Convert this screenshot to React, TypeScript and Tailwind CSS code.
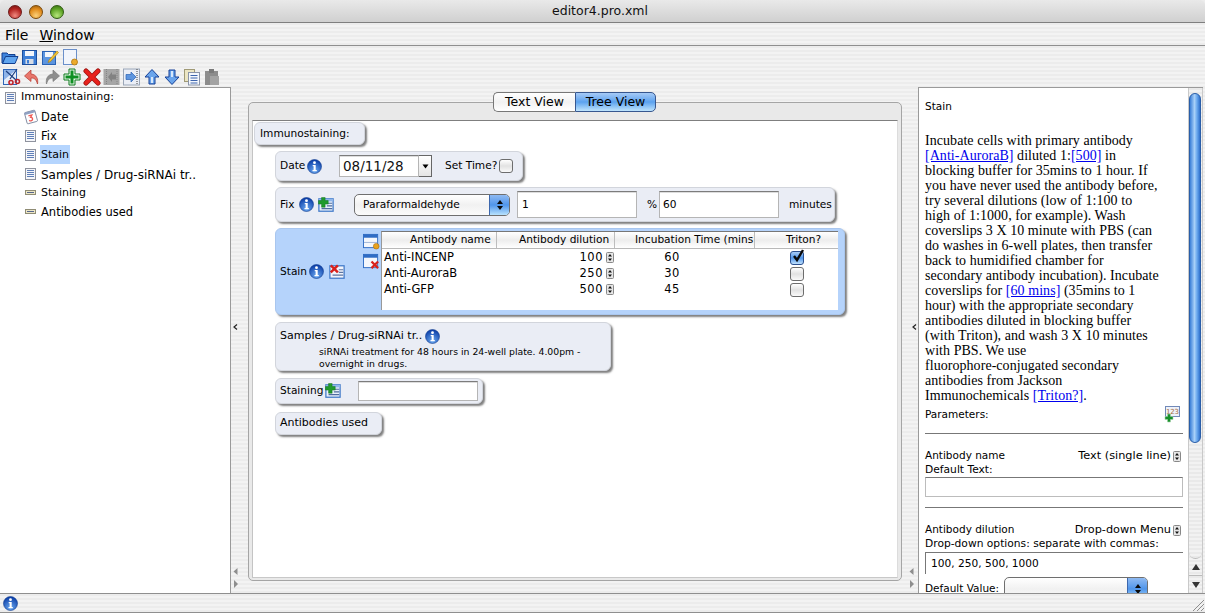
import React from "react";

type P = { className?: string };

const Svg = ({ s = 18, children, className }: { s?: number; children: React.ReactNode; className?: string }) => (
  <svg width={s} height={s} viewBox="0 0 18 18" className={"shrink-0 " + (className ?? "")}>
    {children}
  </svg>
);

const Info = ({ s = 15 }: { s?: number }) => (
  <svg width={s} height={s} viewBox="0 0 15 15" className="shrink-0">
    <defs>
      <radialGradient id="ig" cx="50%" cy="80%" r="75%">
        <stop offset="0" stopColor="#6aa8f0" />
        <stop offset="1" stopColor="#0c3fa8" />
      </radialGradient>
    </defs>
    <circle cx="7.5" cy="7.5" r="7" fill="url(#ig)" stroke="#123d8f" strokeWidth="0.6" />
    <circle cx="7.5" cy="3.7" r="1.4" fill="#fff" />
    <path d="M5.7 6h3v5h1.1v1.3H5.5V11h1.1V7.3H5.7z" fill="#fff" />
  </svg>
);

const ListAdd = () => (
  <Svg s={16}>
    <rect x="1" y="2" width="16" height="14" fill="#e9f0fb" stroke="#3f78c8" strokeWidth="1.4" />
    <rect x="1" y="2" width="16" height="3" fill="#8fb6ea" />
    <path d="M10 7h6M10 10h6M4 13h12" stroke="#4f6c9e" strokeWidth="1.3" />
    <path d="M4 0.5h4v3.500h3.500v4H8v3.500H4V8H0.500V4H4z" fill="#1f9a2c" stroke="#0e6a18" strokeWidth="0.5" />
  </Svg>
);

const ListDel = () => (
  <Svg s={16}>
    <rect x="1" y="2" width="16" height="14" fill="#f3f5fb" stroke="#3f78c8" strokeWidth="1.4" />
    <path d="M11 6.500h5M11 9.500h5M4 12.500h12" stroke="#5d76a3" strokeWidth="1.3" />
    <path d="M2 1.500l8 8M10 1.500l-8 8" stroke="#d8211c" strokeWidth="2.800" />
  </Svg>
);

const RowAdd = () => (
  <Svg s={17}>
    <rect x="0.5" y="1.5" width="15" height="14" fill="#f4f7fc" stroke="#2f6cc4" />
    <rect x="0.5" y="1.5" width="15" height="3.5" fill="#2f6cc4" />
    <path d="M1 10h14" stroke="#9db4d6" />
    <circle cx="14" cy="14" r="3" fill="#e8a21e" stroke="#a8690c" strokeWidth="0.6" />
  </Svg>
);

const RowDel = () => (
  <Svg s={17}>
    <rect x="0.5" y="1.5" width="15" height="14" fill="#f4f7fc" stroke="#2f6cc4" />
    <rect x="0.5" y="1.5" width="15" height="3.5" fill="#2f6cc4" />
    <path d="M9 9l7 7M16 9l-7 7" stroke="#d8211c" strokeWidth="2.4" />
  </Svg>
);

const DocIcon = () => (
  <svg width="12" height="12" viewBox="0 0 12 12" className="shrink-0 ml-[1px]">
    <rect x="0.500" y="0.500" width="10" height="11" fill="#f4f5f9" stroke="#8f939e" />
    <path d="M2 2.500h7M2 4.500h7M2 6.500h7M2 8.500h7" stroke="#5f7fb8" />
  </svg>
);

const FieldIcon = () => (
  <svg width="12" height="12" viewBox="0 0 12 12" className="shrink-0 ml-[1px]">
    <rect x="0.500" y="3.500" width="10" height="4" fill="#ece6c6" stroke="#8f8c74" />
    <path d="M2 5.500h7" stroke="#56668c" />
  </svg>
);

const CalIcon = () => (
  <svg width="16" height="16" viewBox="0 0 18 18" className="shrink-0 -ml-[1px]">
    <g transform="rotate(-15 9 9)">
      <rect x="3" y="2.5" width="12" height="13" rx="1" fill="#fff" stroke="#7e8aa0" />
      <rect x="3" y="2.5" width="12" height="2.5" fill="#8fa0c2" />
      <path d="M6.5 7h4l-2 2.2a2 2 0 1 1-2.2 2.6" fill="none" stroke="#ee5a55" strokeWidth="1.5" />
    </g>
  </svg>
);

const Open = () => (
  <Svg>
    <path d="M1 5h5l1.500 1.500H14v2H5L2 15H1z" fill="#3c83dc" stroke="#123f8f" />
    <path d="M4.500 8.500H17l-3 7H1.500z" fill="#5fa5ef" stroke="#123f8f" />
  </Svg>
);
const Save = () => (
  <Svg>
    <rect x="1.500" y="2.500" width="14" height="14" fill="#3e7fd6" stroke="#1d4f9e" />
    <rect x="4" y="3" width="9" height="5" fill="#f3f6fb" />
    <rect x="4.500" y="11" width="8" height="5" fill="#d8dde6" />
    <rect x="6" y="12" width="2" height="3.500" fill="#3e7fd6" />
  </Svg>
);
const SaveAs = () => (
  <Svg>
    <rect x="1.500" y="3.500" width="13" height="13" fill="#5d95df" stroke="#2a62b4" />
    <rect x="4" y="4" width="8" height="5" fill="#f3f6fb" />
    <path d="M8 12l8-9 1.500 1.500-8 9-2.500 1z" fill="#f4c430" stroke="#a67a10" strokeWidth="0.6" />
  </Svg>
);
const NewDoc = () => (
  <Svg>
    <rect x="2.500" y="1.500" width="13" height="15" fill="#f2f5fb" stroke="#6a8fca" />
    <circle cx="13.500" cy="14" r="3" fill="#ecab2c" stroke="#b07610" strokeWidth="0.8" />
  </Svg>
);
const Cut = () => (
  <Svg>
    <rect x="0.500" y="1.500" width="13" height="15" fill="#e6edf9" stroke="#2f66b8" />
    <path d="M1 2h12L1 12z" fill="#8fb4e8" />
    <path d="M3 3l10 9M14 1L7 11" stroke="#1d3f80" strokeWidth="1.200" />
    <circle cx="14.500" cy="13.500" r="2" fill="none" stroke="#c0242a" strokeWidth="1.600" />
    <circle cx="8" cy="14.500" r="2" fill="none" stroke="#c0242a" strokeWidth="1.600" />
  </Svg>
);
const Undo = ({ c = "#e8766c", d = "#b5382e" }: { c?: string; d?: string }) => (
  <Svg>
    <path d="M8 2L1.500 8 8 13.500V10c3.500 0 5 1 6.500 6 1-5-1-9.500-6.500-10z" fill={c} stroke={d} strokeWidth="0.7" />
  </Svg>
);
const Redo = () => (
  <Svg>
    <path d="M10 2l6.500 6L10 13.500V10c-3.500 0-5 1-6.500 6-1-5 1-9.500 6.500-10z" fill="#8e8e8e" stroke="#7b7b7b" strokeWidth="0.7" />
  </Svg>
);
const Plus = () => (
  <Svg>
    <path d="M6 1h6v5h5v6h-5v5H6v-5H1V6h5z" fill="#eaf6ea" stroke="#0d7a1c" strokeWidth="1" strokeLinejoin="round" />
    <path d="M7.500 2.500h3v5h5v3h-5v5h-3v-5h-5v-3h5z" fill="#0f8f22" />
  </Svg>
);
const Del = () => (
  <Svg>
    <path d="M3 3l12 12M15 3L3 15" stroke="#9a1512" strokeWidth="5" strokeLinecap="round" />
    <path d="M3 3l12 12M15 3L3 15" stroke="#e8211c" strokeWidth="3.500" strokeLinecap="round" />
  </Svg>
);
const Indent = () => (
  <Svg>
    <rect x="0.500" y="1" width="16" height="16" fill="#a6a6a6" />
    <path d="M3.500 1v16M14 1v16" stroke="#858585" strokeDasharray="1 1" />
    <path d="M13 6.500H9V4L5 9l4 5v-2.500h4z" fill="#828282" />
  </Svg>
);
const Outdent = () => (
  <Svg>
    <rect x="0.500" y="1" width="16" height="16" fill="#eaeef6" stroke="#9aa6b8" />
    <path d="M14 1v16" stroke="#444" strokeDasharray="1 1" />
    <path d="M3 6.500h5V4l5 5-5 5v-2.500H3z" fill="#5d95df" stroke="#2a62b4" strokeWidth="0.7" />
  </Svg>
);
const Up = () => (
  <Svg>
    <path d="M9 1.500L16 9h-4v7H6V9H2z" fill="#6aa5ec" stroke="#153f96" strokeLinejoin="round" />
    <path d="M8 9h2v6H8z" fill="#d8e8fb" />
  </Svg>
);
const Down = () => (
  <Svg>
    <path d="M9 16.500L16 9h-4V2H6v7H2z" fill="#6aa5ec" stroke="#153f96" strokeLinejoin="round" />
    <path d="M8 3h2v6H8z" fill="#d8e8fb" />
  </Svg>
);
const Copy = () => (
  <Svg>
    <rect x="1.500" y="1.500" width="10" height="12" fill="#ece6c4" stroke="#a09a76" />
    <rect x="5.500" y="4.500" width="11" height="12.500" fill="#f4f7fc" stroke="#8a94a8" />
    <path d="M7.500 7.500h7M7.500 10h7M7.500 12.500h7M7.500 15h7" stroke="#3d64ad" />
  </Svg>
);
const Paste = () => (
  <Svg>
    <rect x="2" y="3" width="13" height="14" fill="#8c8c8c" />
    <rect x="6" y="1" width="5" height="4" fill="#7a7a7a" />
    <rect x="7" y="8" width="9" height="9" fill="#a3a3a3" />
  </Svg>
);
const Add123 = () => (
  <svg width="17" height="18" viewBox="0 0 17 18" className="shrink-0">
    <rect x="1.500" y="0.500" width="14" height="10" fill="#eef2fa" stroke="#7189b8" />
    <text x="2" y="8" fontSize="7" fill="#a56a3c" fontFamily="DejaVu Sans, sans-serif" textLength="13">123</text>
    <path d="M3.500 8h3v2.500H9v3H6.500V16h-3v-2.500H1v-3h2.500z" fill="#17902a" stroke="#aad3ae" strokeWidth="0.6" />
  </svg>
);

const Card = ({ className, children }: P & { children: React.ReactNode }) => (
  <div
    className={
      "rounded-[6px] border border-[#d2d5dc] bg-[#eaedf5] whitespace-nowrap shadow-[2px_2px_2px_rgba(0,0,0,0.5)] " + (className ?? "")
    }
  >
    {children}
  </div>
);

const Field = ({ className, children }: P & { children?: React.ReactNode }) => (
  <div
    className={
      "bg-white border border-[#b5b5b5] border-t-[#7c7c7c] shadow-[inset_0_1px_0_#ddd] flex items-center " + (className ?? "")
    }
  >
    {children}
  </div>
);

const Stepper = () => (
  <svg width="8" height="11" viewBox="0 0 8 11" className="shrink-0">
    <rect x="0.500" y="0.500" width="7" height="10" rx="1" fill="#e6e6e6" stroke="#888" />
    <path d="M4 2l2 2.500H2zM4 9L2 6.500h4z" fill="#111" />
  </svg>
);

const Check = ({ on }: { on?: boolean }) => (
  <div
    className={
      "relative w-[14px] h-[14px] rounded-[3px] border " +
      (on
        ? "border-[#2a4f8f] bg-gradient-to-b from-[#a9cdf7] via-[#4f95ea] to-[#bfe0fb]"
        : "border-[#6d6d6d] bg-gradient-to-b from-[#ffffff] via-[#e2e2e2] to-[#fafafa]")
    }
  >
    {on && (
      <svg width="16" height="16" viewBox="0 0 16 16" className="absolute -top-[4px] left-0">
        <path d="M3 8l3 4 6-10" fill="none" stroke="#0a0a0a" strokeWidth="2.400" />
      </svg>
    )}
  </div>
);

const Combo = ({ className, children }: P & { children?: React.ReactNode }) => (
  <div
    className={
      "flex rounded-[5px] border border-[#6f6f6f] bg-gradient-to-b from-[#ffffff] via-[#f1f1f1] to-[#fbfbfb] overflow-hidden " +
      (className ?? "")
    }
  >
    <div className="flex-1 pl-[8px] flex items-center leading-none">{children}</div>
    <div className="w-[20px] border-l border-[#3c67ad] bg-gradient-to-b from-[#8fbaf2] via-[#4f95ea] to-[#b8e2fd] flex items-center justify-center">
      <svg width="8" height="12" viewBox="0 0 8 12">
        <path d="M4 1l3 4H1zM4 11L1 7h6z" fill="#0a0a0a" />
      </svg>
    </div>
  </div>
);

const HeadCell = ({ className, children }: P & { children: React.ReactNode }) => (
  <div className={"h-[16px] border-r border-[#bdbdbd] flex items-center justify-start pl-[20px] overflow-hidden whitespace-nowrap " + (className ?? "")}>
    {children}
  </div>
);

const rows = [
  { n: "Anti-INCENP", d: "100", t: "60", c: true },
  { n: "Anti-AuroraB", d: "250", t: "30", c: false },
  { n: "Anti-GFP", d: "500", t: "45", c: false },
];

const TreeItem = ({ icon, label, sel, size }: { icon: React.ReactNode; label: string; sel?: boolean; size: string }) => (
  <div className="flex items-center h-[19px] pl-[23px]">
    <div className="w-[16px] flex justify-start">{icon}</div>
    <span className={"px-[1px] pt-[2px] h-[19px] flex items-center " + size + (sel ? " bg-[#b5d5fe]" : "")}>{label}</span>
  </div>
);

const stripes =
  "bg-[repeating-linear-gradient(180deg,#ececec_0px,#ececec_2px,#f3f3f3_2px,#f3f3f3_4px)]";

export default function App() {
  return (
    <div className="w-[1205px] h-[613px] overflow-hidden flex flex-col bg-[#ededed] text-black text-[10.600px] font-['DejaVu_Sans',sans-serif]">
      {/* title bar */}
      <div className="relative h-[23px] shrink-0 border-b border-[#7f7f7f] bg-[linear-gradient(180deg,#e9e9e9,#d0d0d0)] rounded-t-[5px] flex items-center justify-center pr-[5px] text-[12.500px] text-[#111]">
        <div className="absolute left-[8px] top-[5px] flex gap-[7px]">
          <span className="w-[14px] h-[14px] rounded-full border border-[#6b1a18] bg-[radial-gradient(circle_at_50%_80%,#f08a80,#b3231f_60%,#6c1512)]" />
          <span className="w-[14px] h-[14px] rounded-full border border-[#7a4a0c] bg-[radial-gradient(circle_at_50%_80%,#fbd07a,#e08a1a_60%,#8d560f)]" />
          <span className="w-[14px] h-[14px] rounded-full border border-[#2f5c12] bg-[radial-gradient(circle_at_50%_80%,#b5e67c,#5da325_60%,#33670f)]" />
        </div>
        editor4.pro.xml
      </div>
      {/* menu */}
      <div className={"h-[23px] shrink-0 flex items-center gap-[11px] pl-[5px] pt-[2px] text-[14px] border-b border-[#8f8f8f] " + stripes}>
        <span>File</span>
        <span><span className="underline">W</span>indow</span>
      </div>
      {/* toolbars */}
      <div className={"shrink-0 h-[41px] pt-[1px] pl-[1px] flex flex-col " + stripes}>
        <div className="flex gap-[2px] h-[20px] items-center">
          <Open /><Save /><SaveAs /><NewDoc />
        </div>
        <div className="flex gap-[2px] h-[20px] items-center pl-[2px]">
          <Cut /><Undo /><Redo /><Plus /><Del /><Indent /><Outdent /><Up /><Down /><Copy /><Paste />
        </div>
      </div>
      {/* main */}
      <div className="flex-1 min-h-0 flex">
        <div className="w-[231px] shrink-0 bg-white border-t border-r border-[#9a9a9a] pl-[1px] overflow-hidden">
          <div className="flex items-center h-[19px] pl-[3px] text-[11px]">
            <div className="w-[17px]"><DocIcon /></div>
            <span>Immunostaining:</span>
          </div>
          <TreeItem icon={<CalIcon />} label="Date" size="text-[11.500px]" />
          <TreeItem icon={<DocIcon />} label="Fix" size="text-[11.500px]" />
          <TreeItem icon={<DocIcon />} label="Stain" sel size="text-[11px]" />
          <TreeItem icon={<DocIcon />} label="Samples / Drug-siRNAi tr.." size="text-[12px]" />
          <TreeItem icon={<FieldIcon />} label="Staining" size="text-[11px]" />
          <TreeItem icon={<FieldIcon />} label="Antibodies used" size="text-[11.500px]" />
        </div>
        {/* left splitter */}
        <div className={"w-[17px] shrink-0 flex flex-col pl-[2px] pb-[1px] " + stripes}>
          <div className="flex-1 flex items-center">
            <svg width="5" height="6" viewBox="0 0 5 6"><path d="M4 0.500L1 3l3 2.500" fill="none" stroke="#222" strokeWidth="1.200" /></svg>
          </div>
          <svg width="6" height="24" viewBox="0 0 6 24" className="mb-[1px]">
            <path d="M4.500 1v7L0.500 4.500zM1 13v8l4-4z" fill="#8e8e8e" />
          </svg>
        </div>
        {/* center */}
        <div className={"flex-1 min-w-0 flex flex-col pt-[5px] pb-[12px] " + stripes}>
          <div className="relative z-10 flex justify-center h-[20px] text-[12.500px]">
            <div className="flex h-[20px] ml-[-1px]">
              <div className="w-[82px] rounded-l-[5px] border border-[#777] border-r-0 bg-gradient-to-b from-[#ffffff] via-[#f2f2f2] to-[#ffffff] flex items-center justify-center">Text View</div>
              <div className="w-[81px] rounded-r-[5px] border border-[#37578f] bg-gradient-to-b from-[#a6caf6] via-[#5ba2ee] to-[#bfe4fc] flex items-center justify-center">Tree View</div>
            </div>
          </div>
          <div className="-mt-[10px] flex-1 min-h-0 rounded-[5px] border border-[#a5a5a5] pt-[17px] px-[3px] pb-[2px] bg-[#e9e9e9] flex flex-col">
            <div className="flex-1 min-h-0 bg-white border-t border-t-[#7f7f7f] border-l border-l-[#c4c4c4] border-r border-r-[#dcdcdc] border-b border-b-[#c8c8c8] pt-[1px] pl-[1px] flex flex-col items-start gap-[6px] overflow-hidden">
              <Card className="w-[111px] h-[23px] flex items-center pl-[5px] pt-[1px]">Immunostaining:</Card>
              <div className="ml-[21px] flex flex-col items-start gap-[6px]">
                <Card className="w-[248px] h-[30px] flex items-center pl-[4px]">
                  <span className="w-[27px]">Date</span>
                  <Info />
                  <Field className="ml-[17px] w-[80px] h-[22px] pl-[3px] text-[13.500px] text-[#111]">08/11/28</Field>
                  <div className="w-[13px] h-[22px] border border-l-0 border-[#666] bg-gradient-to-b from-[#fff] to-[#e5e5e5] flex items-center justify-center">
                    <svg width="7" height="5" viewBox="0 0 7 5"><path d="M0.500 0.500h6L3.500 4.500z" fill="#000" /></svg>
                  </div>
                  <span className="ml-[13px] w-[54px]">Set Time?</span>
                  <Check />
                </Card>
                <Card className="w-[560px] h-[35px] flex items-center pl-[4px]">
                  <span className="w-[19px]">Fix</span>
                  <Info />
                  <span className="w-[4px]" />
                  <ListAdd />
                  <Combo className="ml-[20px] w-[156px] h-[22px]">Paraformaldehyde</Combo>
                  <Field className="ml-[7px] w-[120px] h-[27px] pl-[4px]">1</Field>
                  <span className="ml-[10px] w-[12px]">%</span>
                  <Field className="w-[120px] h-[27px] pl-[3px]">60</Field>
                  <span className="ml-[10px]">minutes</span>
                </Card>
                <Card className="w-[570px] h-[87px] !bg-[#b5d3fb] !border-[#a9c6ee] flex items-center pl-[4px] pr-[6px]">
                  <span className="w-[29px]">Stain</span>
                  <Info />
                  <span className="w-[5px]" />
                  <ListDel />
                  <div className="ml-[18px] w-[18px] self-start pt-[4px] flex flex-col gap-[3px]">
                    <RowAdd />
                    <RowDel />
                  </div>
                  <div className="flex-1 self-start mt-[2px] h-[79px] bg-white border-t border-t-[#777] border-l border-l-[#999]">
                    <div className="grid grid-cols-[115px_118px_140px_1fr] border-b border-[#b9b9b9] bg-gradient-to-b from-[#ffffff] via-[#ededed] to-[#ffffff]">
                      <HeadCell className="pl-[28px]">Antibody name</HeadCell>
                      <HeadCell className="pl-[22px]">Antibody dilution</HeadCell>
                      <HeadCell className="pl-[18px]">Incubation Time (mins)</HeadCell>
                      <HeadCell className="border-r-0 pl-[31px]">Triton?</HeadCell>
                    </div>
                    {rows.map((r) => (
                      <div key={r.n} className="grid grid-cols-[115px_118px_140px_1fr] h-[16px] items-center text-[11.500px]">
                        <div className="pl-[2px]">{r.n}</div>
                        <div className="flex justify-end items-center gap-[3px] pr-[1px]">
                          <span className="tracking-[0.5px]">{r.d}</span>
                          <Stepper />
                        </div>
                        <div className="text-center pr-[26px] tracking-[0.5px]">{r.t}</div>
                        <div className="flex justify-center"><Check on={r.c} /></div>
                      </div>
                    ))}
                  </div>
                </Card>
                <Card className="mt-[1px] w-[336px] h-[49px] pl-[4px] pt-[5px]">
                  <div className="flex items-center gap-[3px] h-[16px] text-[11px]">
                    Samples / Drug-siRNAi tr..<Info />
                  </div>
                  <div className="pl-[39px] text-[9.300px] leading-[12px] mt-[2px]">
                    siRNAi treatment for 48 hours in 24-well plate. 4.00pm -<br />overnight in drugs.
                  </div>
                </Card>
                <Card className="mt-[1px] w-[208px] h-[26px] flex items-center pl-[4px]">
                  <span className="w-[45px]">Staining</span>
                  <ListAdd />
                  <Field className="ml-[17px] w-[120px] h-[20px]" />
                </Card>
                <Card className="mt-[2px] w-[107px] h-[23px] flex items-center pl-[4px] text-[11px]">Antibodies used</Card>
              </div>
            </div>
          </div>
        </div>
        {/* right splitter */}
        <div className={"w-[16px] shrink-0 flex flex-col items-end pr-[1px] pb-[1px] " + stripes}>
          <div className="flex-1 flex items-center">
            <svg width="5" height="6" viewBox="0 0 5 6"><path d="M4 0.500L1 3l3 2.500" fill="none" stroke="#222" strokeWidth="1.200" /></svg>
          </div>
          <svg width="6" height="24" viewBox="0 0 6 24" className="mb-[1px] mr-[2px]">
            <path d="M4.500 1v7L0.500 4.500zM1 13v8l4-4z" fill="#8e8e8e" />
          </svg>
        </div>
        {/* right panel */}
        <div className="w-[285px] shrink-0 bg-white border-t border-l border-[#9a9a9a] flex">
          <div className="w-[269px] shrink-0 pl-[6px] pr-[5px] overflow-hidden">
            <div className="mt-[12px] h-[14px] flex items-center text-[10.500px]">Stain</div>
            <p className="mt-[19px] font-['Liberation_Serif',serif] text-[14px] leading-[15px] tracking-[0.05px] whitespace-nowrap">
              Incubate cells with primary antibody<br />
              <a className="text-[#0000ee] underline">[Anti-AuroraB]</a> diluted 1:<a className="text-[#0000ee] underline">[500]</a> in<br />
              blocking buffer for 35mins to 1 hour. If<br />
              you have never used the antibody before,<br />
              try several dilutions (low of 1:100 to<br />
              high of 1:1000, for example). Wash<br />
              coverslips 3 X 10 minute with PBS (can<br />
              do washes in 6-well plates, then transfer<br />
              back to humidified chamber for<br />
              secondary antibody incubation). Incubate<br />
              coverslips for <a className="text-[#0000ee] underline">[60 mins]</a> (35mins to 1<br />
              hour) with the appropriate secondary<br />
              antibodies diluted in blocking buffer<br />
              (with Triton), and wash 3 X 10 minutes<br />
              with PBS. We use<br />
              fluorophore-conjugated secondary<br />
              antibodies from Jackson<br />
              Immunochemicals <a className="text-[#0000ee] underline">[Triton?]</a>.
            </p>
            <div className="flex justify-between items-center h-[17px] mt-[3px] text-[10.500px]">
              <span>Parameters:</span>
              <span className="mr-[2px]"><Add123 /></span>
            </div>
            <div className="mt-[10px] border-t border-[#777]" />
            <div className="mt-[15px] flex justify-between items-center h-[14px] text-[10.500px] pr-[2px]">
              <span>Antibody name</span>
              <span className="flex items-center gap-[2px] text-[11.300px]">Text (single line)<Stepper /></span>
            </div>
            <div className="mt-[1px] h-[13px] flex items-center text-[10.700px]">Default Text:</div>
            <div className="h-[20px] border border-[#bcbcbc] border-t-[#777]" />
            <div className="mt-[10px] border-t border-[#777]" />
            <div className="mt-[15px] flex justify-between items-center h-[14px] text-[10.500px] pr-[2px]">
              <span>Antibody dilution</span>
              <span className="flex items-center gap-[2px] text-[11.300px]">Drop-down Menu<Stepper /></span>
            </div>
            <div className="mt-[1px] h-[13px] flex items-center text-[10.700px] whitespace-nowrap">Drop-down options: separate with commas:</div>
            <div className="mt-[1px] h-[22px] border-t border-l border-[#777] pl-[5px] flex items-center text-[10.600px]">100, 250, 500, 1000</div>
            <div className="mt-[3px] flex items-start text-[10.500px] h-[30px]">
              <span className="w-[79px] pt-[4px] whitespace-nowrap">Default Value:</span>
              <Combo className="w-[144px] h-[24px]" />
            </div>
          </div>
          {/* scrollbar */}
          <div className="flex-1 bg-[repeating-linear-gradient(180deg,#e9e9e9_0px,#e9e9e9_2px,#f2f2f2_2px,#f2f2f2_4px)] border-l border-r border-[#c9c9c9] flex flex-col">
            <div className="mt-[5px] w-[12px] h-[350px] rounded-full border border-[#2a5ea8] bg-[linear-gradient(90deg,#3b7fd8,#a8d0f8_45%,#6aa8ee_70%,#2f70cc)]" />
            <div className="flex-1 rounded-b-[7px] border-b border-[#bbb]" />
            <div className="h-[17px] flex items-center justify-center border-b border-[#bbb]">
              <svg width="8" height="6" viewBox="0 0 8 6"><path d="M4 0l4 6H0z" fill="#333" /></svg>
            </div>
            <div className="h-[17px] flex items-center justify-center">
              <svg width="8" height="6" viewBox="0 0 8 6"><path d="M4 6L0 0h8z" fill="#333" /></svg>
            </div>
          </div>
        </div>
        <div className={"w-[2px] shrink-0 " + stripes} />
      </div>
      {/* status */}
      <div className={"relative h-[20px] shrink-0 border-t border-b border-[#8f8f8f] flex items-center pl-[3px] " + stripes}>
        <Info />
        <svg width="13" height="13" viewBox="0 0 13 13" className="absolute right-0 bottom-0">
          <path d="M12 1L1 12M12 5l-7 7M12 9l-3 3" stroke="#8d8d8d" />
        </svg>
      </div>
    </div>
  );
}
